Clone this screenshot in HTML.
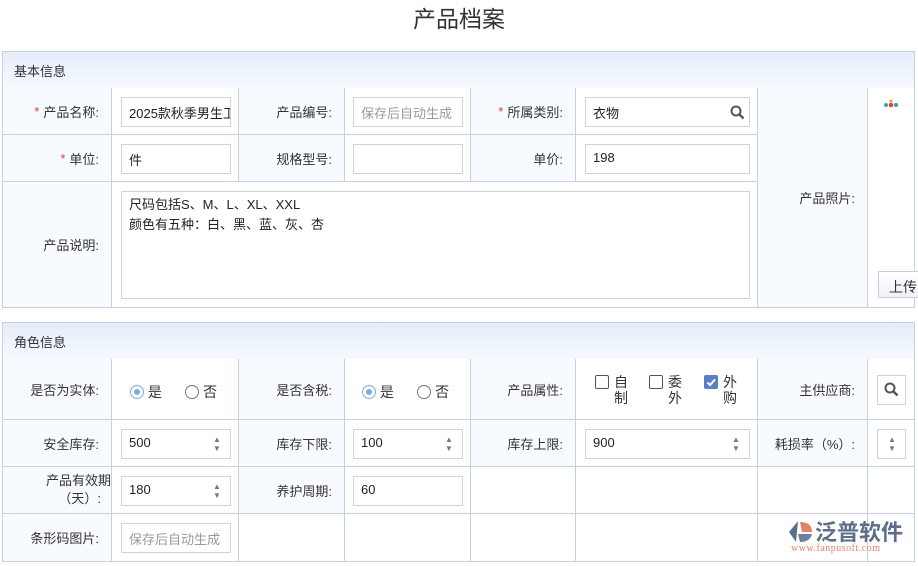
<!DOCTYPE html>
<html><head><meta charset="utf-8"><style>
*{box-sizing:border-box;margin:0;padding:0}
body{width:918px;height:566px;background:#fff;position:relative;overflow:hidden;font-family:"Liberation Sans","Noto Sans CJK SC",sans-serif;font-size:13px;color:#333}
.a{position:absolute}
.title{left:0;width:918px;top:0px;text-align:center;font-size:23px;color:#333}
.hd{background:linear-gradient(#e5edf9,#f6f9fe);border:1px solid #c5d0e3;left:2px;width:913px;height:38px;padding:9px 0 0 11px;font-size:13px}
.c{border-right:1px solid #c5d0e3;border-bottom:1px solid #c5d0e3}
.lb{background:#f7fbff;text-align:right;padding-right:12px;display:flex;align-items:center;justify-content:flex-end}
.v{background:#fff}
.in{background:#fff;border:1px solid #d3d3d3;height:30px;padding:5px 7px;font-size:13px;color:#222;overflow:hidden;white-space:nowrap}
.ph{color:#999}
.st{color:#e33;margin-right:4px}
.sp{position:absolute;right:9px;top:5px;width:8px;font-size:8px;line-height:9px;color:#777}
.rad{width:14px;height:14px;border:1px solid #777;border-radius:50%;display:inline-block;vertical-align:-2px;position:relative}
.rad.on{border-color:#7aaddf}
.rad.on:after{content:"";position:absolute;left:3px;top:3px;width:6px;height:6px;border-radius:50%;background:#7aaddf}
.cb{width:14px;height:14px;border:1px solid #555;border-radius:2px;position:absolute}
.bl{border-left:1px solid #c5d0e3}
</style></head><body>
<div class="a title">产品档案</div>

<div class="a hd" style="top:51px">基本信息</div>
<div class="a c lb bl" style="left:2px;top:88px;width:110px;height:47px"><span class="st">*</span>产品名称:</div>
<div class="a c v" style="left:112px;top:88px;width:127px;height:47px"></div>
<div class="a c lb" style="left:239px;top:88px;width:106px;height:47px">产品编号:</div>
<div class="a c v" style="left:345px;top:88px;width:126px;height:47px"></div>
<div class="a c lb" style="left:471px;top:88px;width:105px;height:47px"><span class="st">*</span>所属类别:</div>
<div class="a c v" style="left:576px;top:88px;width:182px;height:47px"></div>

<div class="a c lb bl" style="left:2px;top:135px;width:110px;height:47px"><span class="st">*</span>单位:</div>
<div class="a c v" style="left:112px;top:135px;width:127px;height:47px"></div>
<div class="a c lb" style="left:239px;top:135px;width:106px;height:47px">规格型号:</div>
<div class="a c v" style="left:345px;top:135px;width:126px;height:47px"></div>
<div class="a c lb" style="left:471px;top:135px;width:105px;height:47px">单价:</div>
<div class="a c v" style="left:576px;top:135px;width:182px;height:47px"></div>

<div class="a c lb bl" style="left:2px;top:182px;width:110px;height:126px">产品说明:</div>
<div class="a c v" style="left:112px;top:182px;width:646px;height:126px"></div>
<div class="a c lb" style="left:758px;top:88px;width:110px;height:220px">产品照片:</div>
<div class="a c v" style="left:868px;top:88px;width:47px;height:220px"></div>

<div class="a in" style="left:121px;top:97px;width:110px">2025款秋季男生卫衣</div>
<div class="a in ph" style="left:353px;top:97px;width:110px">保存后自动生成</div>
<div class="a in" style="left:585px;top:97px;width:165px">衣物
<svg class="a" style="right:4px;top:7px" width="15" height="15" viewBox="0 0 15 15"><circle cx="6" cy="6" r="4.5" fill="none" stroke="#555" stroke-width="2"/><path d="M9.5 9.5L13.5 13.5" stroke="#555" stroke-width="2.4"/></svg></div>
<div class="a in" style="left:121px;top:144px;width:110px">件</div>
<div class="a in" style="left:353px;top:144px;width:110px"></div>
<div class="a in" style="left:585px;top:144px;width:165px">198</div>
<div class="a in" style="left:121px;top:191px;width:629px;height:108px;white-space:normal;line-height:20px;padding-top:3px">尺码包括S、M、L、XL、XXL<br>颜色有五种：白、黑、蓝、灰、杏</div>
<div class="a" style="left:881px;top:97px;width:20px;height:10px">
<svg width="20" height="10"><circle cx="5" cy="6" r="2" fill="#3a9"/><circle cx="10" cy="6" r="2.3" fill="#d44"/><circle cx="15" cy="6" r="2" fill="#39c"/><circle cx="10" cy="2" r="1.5" fill="#e93"/></svg></div>
<div class="a" style="left:878px;top:271px;width:42px;height:27px;border:1px solid #ccd;background:linear-gradient(#fff,#eef2f8);padding:5px 0 0 10px;font-size:14px">上传</div>

<div class="a hd" style="top:322px">角色信息</div>
<div class="a c lb bl" style="left:2px;top:359px;width:110px;height:61px">是否为实体:</div>
<div class="a c v" style="left:112px;top:359px;width:127px;height:61px"></div>
<div class="a c lb" style="left:239px;top:359px;width:106px;height:61px">是否含税:</div>
<div class="a c v" style="left:345px;top:359px;width:126px;height:61px"></div>
<div class="a c lb" style="left:471px;top:359px;width:105px;height:61px">产品属性:</div>
<div class="a c v" style="left:576px;top:359px;width:182px;height:61px"></div>
<div class="a c lb" style="left:758px;top:359px;width:110px;height:61px">主供应商:</div>
<div class="a c v" style="left:868px;top:359px;width:47px;height:61px"></div>

<div class="a c lb bl" style="left:2px;top:420px;width:110px;height:47px">安全库存:</div>
<div class="a c v" style="left:112px;top:420px;width:127px;height:47px"></div>
<div class="a c lb" style="left:239px;top:420px;width:106px;height:47px">库存下限:</div>
<div class="a c v" style="left:345px;top:420px;width:126px;height:47px"></div>
<div class="a c lb" style="left:471px;top:420px;width:105px;height:47px">库存上限:</div>
<div class="a c v" style="left:576px;top:420px;width:182px;height:47px"></div>
<div class="a c lb" style="left:758px;top:420px;width:110px;height:47px">耗损率（%）:</div>
<div class="a c v" style="left:868px;top:420px;width:47px;height:47px"></div>

<div class="a c lb bl" style="left:2px;top:467px;width:110px;height:47px;padding-right:0;line-height:18px;flex-direction:column;align-items:flex-end;justify-content:center"><div>产品有效期</div><div style="padding-right:10px">（天）:</div></div>
<div class="a c v" style="left:112px;top:467px;width:127px;height:47px"></div>
<div class="a c lb" style="left:239px;top:467px;width:106px;height:47px">养护周期:</div>
<div class="a c v" style="left:345px;top:467px;width:126px;height:47px"></div>
<div class="a c v" style="left:471px;top:467px;width:105px;height:47px"></div>
<div class="a c v" style="left:576px;top:467px;width:182px;height:47px"></div>
<div class="a c v" style="left:758px;top:467px;width:110px;height:47px"></div>
<div class="a c v" style="left:868px;top:467px;width:47px;height:47px"></div>

<div class="a c lb bl" style="left:2px;top:514px;width:110px;height:48px">条形码图片:</div>
<div class="a c v" style="left:112px;top:514px;width:127px;height:48px"></div>
<div class="a c v" style="left:239px;top:514px;width:106px;height:48px"></div>
<div class="a c v" style="left:345px;top:514px;width:126px;height:48px"></div>
<div class="a c v" style="left:471px;top:514px;width:105px;height:48px"></div>
<div class="a c v" style="left:576px;top:514px;width:182px;height:48px"></div>
<div class="a c v" style="left:758px;top:514px;width:110px;height:48px"></div>
<div class="a c v" style="left:868px;top:514px;width:47px;height:48px"></div>

<div class="a" style="left:130px;top:382px;font-size:14px"><span class="rad on"></span> 是&nbsp;&nbsp;&nbsp;&nbsp;&nbsp;&nbsp;<span class="rad"></span> 否</div>
<div class="a" style="left:362px;top:382px;font-size:14px"><span class="rad on"></span> 是&nbsp;&nbsp;&nbsp;&nbsp;&nbsp;&nbsp;<span class="rad"></span> 否</div>
<div class="cb" style="left:595px;top:375px"></div><div class="a" style="left:614px;top:374px;width:14px;line-height:16px;font-size:14px">自制</div>
<div class="cb" style="left:649px;top:375px"></div><div class="a" style="left:668px;top:374px;width:14px;line-height:16px;font-size:14px">委外</div>
<div class="cb" style="left:704px;top:375px;background:#5a7fc6;border-color:#5a7fc6"><svg width="12" height="12" style="position:absolute;left:0;top:0"><path d="M2.5 6.5L5 9L10 3.5" stroke="#fff" stroke-width="2" fill="none"/></svg></div><div class="a" style="left:723px;top:374px;width:14px;line-height:16px;font-size:14px">外购</div>
<div class="a in" style="left:877px;top:375px;width:29px;height:30px"><svg class="a" style="left:6px;top:6px" width="15" height="15" viewBox="0 0 15 15"><circle cx="6" cy="6" r="4.5" fill="none" stroke="#555" stroke-width="2"/><path d="M9.5 9.5L13.5 13.5" stroke="#555" stroke-width="2.4"/></svg></div>

<div class="a in" style="left:121px;top:429px;width:110px">500<div class="sp">▲<br>▼</div></div>
<div class="a in" style="left:353px;top:429px;width:110px">100<div class="sp">▲<br>▼</div></div>
<div class="a in" style="left:585px;top:429px;width:165px">900<div class="sp">▲<br>▼</div></div>
<div class="a in" style="left:877px;top:429px;width:29px"><div class="sp">▲<br>▼</div></div>
<div class="a in" style="left:121px;top:476px;width:110px">180<div class="sp">▲<br>▼</div></div>
<div class="a in" style="left:353px;top:476px;width:110px">60</div>
<div class="a in ph" style="left:121px;top:523px;width:110px">保存后自动生成</div>

<div class="a" style="left:788px;top:518px;width:128px;height:42px">
<svg class="a" style="left:0;top:2px" width="26" height="24" viewBox="0 0 26 24"><path d="M10 1L1 12L8 22Z" fill="#5b6f8e"/><path d="M12 2Q24 2 24 12L14 12Z" fill="#e08565"/><path d="M10 14L24 14Q22 22 12 22Z" fill="#6d7f9c"/></svg>
<div class="a" style="left:27px;top:-3px;font-size:22px;color:#5d6e8a;font-weight:bold;white-space:nowrap">泛普软件</div>
<div class="a" style="left:3px;top:25px;font-size:10px;color:#e08565;font-family:'Liberation Serif',serif;white-space:nowrap;letter-spacing:0.5px">www.fanpusoft.com</div>
</div>
</body></html>
